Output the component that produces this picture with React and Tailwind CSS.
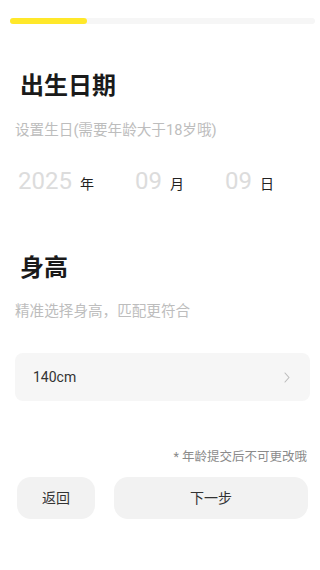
import React from "react";

const DatePart = ({ value, unit }) => (
	<div className="flex items-baseline gap-2">
		<span className="text-[24px] leading-[32px] text-[#dcdcdc]">{value}</span>
		<span className="text-[14px] leading-[20px] text-[#222]">{unit}</span>
	</div>
);

const App = () => {
	return (
		<div className="w-full h-[570px] bg-white flex flex-col font-['Roboto','Noto_Sans_CJK_SC',sans-serif]">
			{/* progress */}
			<div className="mt-[18px] ml-[10px] mr-[5px] h-[6px] rounded-full bg-[#f6f6f6]">
				<div className="w-[77px] h-full rounded-full bg-[#ffe82a]"></div>
			</div>

			{/* 出生日期 */}
			<h1 className="mt-[46px] ml-[20px] text-[24px] leading-[32px] font-bold text-[#1a1a1a]">出生日期</h1>
			<p className="mt-[18px] ml-[15px] text-[14.6px] leading-[20px] text-[#bdbdbd]">
				设置生日(需要年龄大于18岁哦)
			</p>
			<div className="mt-[25px] ml-[18px] flex items-baseline gap-[41px]">
				<DatePart value="2025" unit="年" />
				<DatePart value="09" unit="月" />
				<DatePart value="09" unit="日" />
			</div>

			{/* 身高 */}
			<h1 className="mt-[55px] ml-[20px] text-[24px] leading-[32px] font-bold text-[#1a1a1a]">身高</h1>
			<p className="mt-[17px] ml-[15px] text-[14.6px] leading-[20px] text-[#bdbdbd]">
				精准选择身高，匹配更符合
			</p>
			<div className="mt-[32px] ml-[15px] mr-[10px] h-[48px] rounded-lg bg-[#f6f6f6] flex items-center justify-between pl-[18px] pr-[20px]">
				<span className="text-[14px] text-[#333]">140cm</span>
				<svg width="6" height="11" viewBox="0 0 6 11" fill="none">
					<path d="M1 1l4 4.5L1 10" stroke="#bbb" strokeWidth="1.1" strokeLinecap="round" strokeLinejoin="round" />
				</svg>
			</div>

			{/* footer */}
			<p className="mt-[48px] mr-[13px] self-end text-[12.5px] leading-[16px] text-[#8a8a8a]">
				* 年龄提交后不可更改哦
			</p>
			<div className="mt-[12px] ml-[17px] mr-[12px] flex gap-[19px]">
				<button className="w-[78px] h-[42px] rounded-[14px] bg-[#f2f2f2] text-[14px] text-[#333]">返回</button>
				<button className="flex-1 h-[42px] rounded-[14px] bg-[#f2f2f2] text-[14px] text-[#333]">下一步</button>
			</div>
		</div>
	);
};

export default App;
